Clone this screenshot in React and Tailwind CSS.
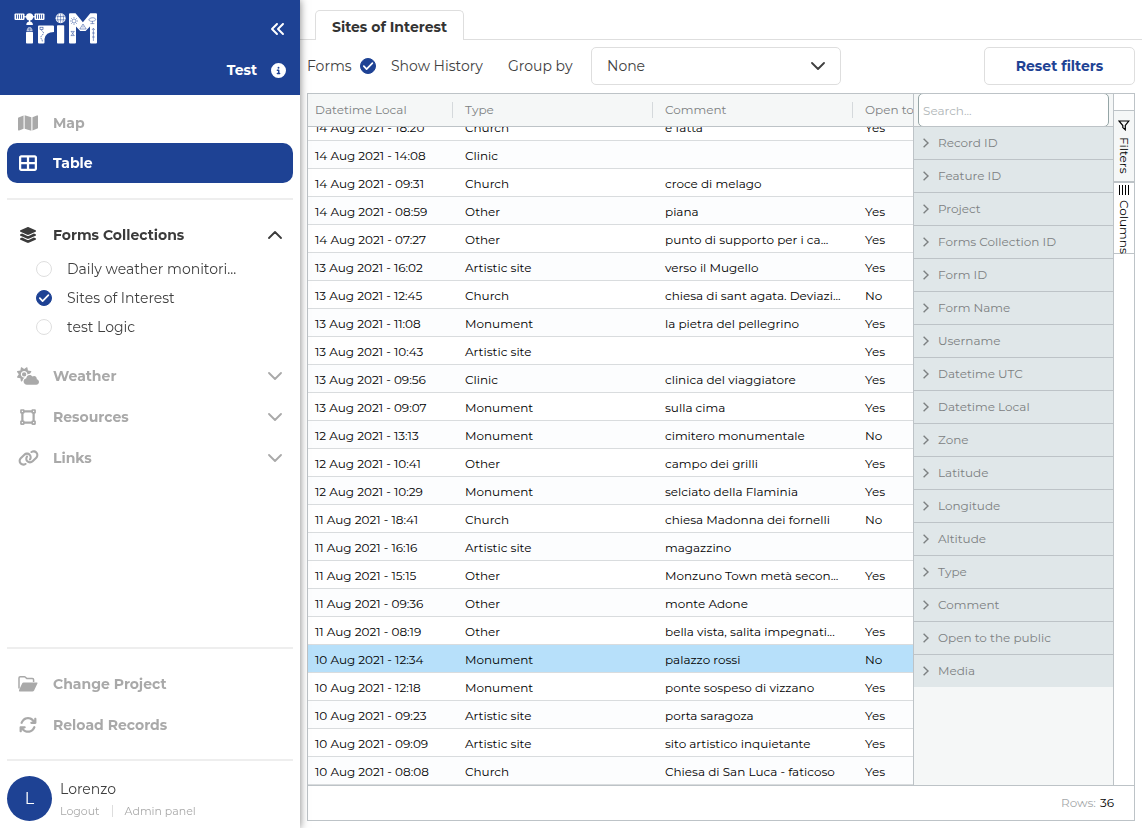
import { useLayoutEffect, useRef } from "react";
import {
  FaAnglesLeft,
  FaArrowsRotate,
  FaCircleInfo,
  FaCloudSun,
  FaLayerGroup,
  FaLink,
  FaMap,
  FaTableCellsLarge,
  FaVectorSquare,
} from "react-icons/fa6";

const records = [
  ["14 Aug 2021 - 18:20", "Church", "e fatta", "Yes"],
  ["14 Aug 2021 - 14:08", "Clinic", "", ""],
  ["14 Aug 2021 - 09:31", "Church", "croce di melago", ""],
  ["14 Aug 2021 - 08:59", "Other", "piana", "Yes"],
  ["14 Aug 2021 - 07:27", "Other", "punto di supporto per i ca...", "Yes"],
  ["13 Aug 2021 - 16:02", "Artistic site", "verso il Mugello", "Yes"],
  ["13 Aug 2021 - 12:45", "Church", "chiesa di sant agata. Deviazi...", "No"],
  ["13 Aug 2021 - 11:08", "Monument", "la pietra del pellegrino", "Yes"],
  ["13 Aug 2021 - 10:43", "Artistic site", "", "Yes"],
  ["13 Aug 2021 - 09:56", "Clinic", "clinica del viaggiatore", "Yes"],
  ["13 Aug 2021 - 09:07", "Monument", "sulla cima", "Yes"],
  ["12 Aug 2021 - 13:13", "Monument", "cimitero monumentale", "No"],
  ["12 Aug 2021 - 10:41", "Other", "campo dei grilli", "Yes"],
  ["12 Aug 2021 - 10:29", "Monument", "selciato della Flaminia", "Yes"],
  ["11 Aug 2021 - 18:41", "Church", "chiesa Madonna dei fornelli", "No"],
  ["11 Aug 2021 - 16:16", "Artistic site", "magazzino", ""],
  ["11 Aug 2021 - 15:15", "Other", "Monzuno Town metà secon...", "Yes"],
  ["11 Aug 2021 - 09:36", "Other", "monte Adone", ""],
  ["11 Aug 2021 - 08:19", "Other", "bella vista, salita impegnati...", "Yes"],
  ["10 Aug 2021 - 12:34", "Monument", "palazzo rossi", "No"],
  ["10 Aug 2021 - 12:18", "Monument", "ponte sospeso di vizzano", "Yes"],
  ["10 Aug 2021 - 09:23", "Artistic site", "porta saragoza", "Yes"],
  ["10 Aug 2021 - 09:09", "Artistic site", "sito artistico inquietante", "Yes"],
  ["10 Aug 2021 - 08:08", "Church", "Chiesa di San Luca - faticoso", "Yes"],
];

const selectedRecord = "10 Aug 2021 - 12:34";

const columns = ["Datetime Local", "Type", "Comment", "Open to the public"];

const filters = [
  "Record ID",
  "Feature ID",
  "Project",
  "Forms Collection ID",
  "Form ID",
  "Form Name",
  "Username",
  "Datetime UTC",
  "Datetime Local",
  "Zone",
  "Latitude",
  "Longitude",
  "Altitude",
  "Type",
  "Comment",
  "Open to the public",
  "Media",
];

function Logo() {
  return (
    <svg viewBox="0 0 84 31" className="h-[31px] w-[84px]" fill="#fff" role="img" aria-label="TriM">
      <rect x="0.5" y="0.5" width="10" height="6.5" rx="1" />
      <rect x="20.5" y="0.5" width="10" height="6.5" rx="1" />
      <path d="M10 3.2h11v1.2H10z" />
      <path
        d="M2.5 1.6v4.2M4.5 1.6v4.2M6.5 1.6v4.2M8.5 1.6v4.2M22.5 1.6v4.2M24.5 1.6v4.2M26.5 1.6v4.2M28.5 1.6v4.2"
        stroke="#1e4294"
        strokeWidth="0.8"
      />
      <circle cx="15.6" cy="3.8" r="3.6" />
      <path d="M12.3 12a3.3 3.6 0 0 1 6.6 0z" />
      <path d="M15 6h1.2v4H15z" />
      <path d="M12.6 18c0-2.3 1.3-4 3-4s3 1.7 3 4z" opacity="0.7" />
      <path d="M13.6 16.2h4M15.6 14.5v3.5" stroke="#1e4294" strokeWidth="0.4" />
      <rect x="12" y="18.8" width="7" height="11.8" rx="0.8" />
      <path d="M24 13.4q0-1 1-1h14q1 0 1 1V19q-8.5 0-9.500 7v3.600q0 1-1 1H25q-1 0-1-1z" />
      <path
        d="M27.3 17.2c1.6 1.6 2.6 2 2 3.6-.8 1.6-2.6 2-2.4 4 .2 1.4 1.6 1.4 1.4 4"
        fill="none"
        stroke="#1e4294"
        strokeWidth="0.7"
        strokeDasharray="1.600 0.700"
      />
      <rect x="26" y="14.2" width="3" height="2.4" fill="none" stroke="#1e4294" strokeWidth="0.6" />
      <circle cx="46.6" cy="5.2" r="5" />
      <path
        d="M42.4 3.6h8.4M42.4 6.8h8.4M46.6.6v9.2M44.4 1.2c-1 2.6-1 5.4 0 8M48.8 1.2c1 2.6 1 5.4 0 8"
        fill="none"
        stroke="#1e4294"
        strokeWidth="0.5"
      />
      <rect x="43" y="12.200" width="7.200" height="18.400" rx="0.800" />
      <path d="M55 1.200q0-1 1-1h5.500l7.400 9 7.400-9H82q1 0 1 1v28.400q0 1-1 1h-5q-1 0-1-1V13.400L71.600 18h-5.400L62 13.400v16.200q0 1-1 1h-5q-1 0-1-1z" />
      <g fill="none" stroke="#1e4294" strokeWidth="0.5">
        <circle cx="60" cy="8" r="2" />
        <path d="M60 4v1.200M60 10.800V12M56 8h1.200M62.800 8H64M57.200 5.200l.9.9M61.900 9.900l.9.9M62.800 5.200l-.9.9M57.200 10.800l.9-.9" />
        <path d="m69 11-3.200 5h6.400zM69 12.800v1.800" />
        <path d="M75 7.200c-1-2 5-3.600 6.400-1.400C83 8.400 76 9.200 75 7.200M78.400 8v2.600M76.400 10.600h4" />
        <path d="M56.800 18.400h3.600M56.800 22.600h3.600M57.200 18.400l3 4.200M60.200 18.400l-3 4.200" />
        <path d="M79.400 28V15.600M78 17l1.400-1.800 1.400 1.800M78 20h2.800M78 24h2.800" />
      </g>
    </svg>
  );
}

function FolderOpenIcon() {
  return (
    <svg viewBox="0 0 20 16" className="h-4 w-5" aria-hidden="true">
      <path
        d="M1 12.500V2Q1 .8 2.200.8h4.300Q7 .8 7.400 1.200L8.800 2.600h5.600q1.200 0 1.200 1.200V6"
        fill="none"
        stroke="currentColor"
        strokeWidth="1.500"
      />
      <path
        d="M5.600 6.500h13.200q1.200 0 .6 1.100l-3.300 6.900q-.6 1-1.700 1H2q-1.700 0-.9-1.500l3-6.500q.5-1 1.500-1z"
        fill="currentColor"
      />
    </svg>
  );
}

function Chevron({ className = "" }) {
  return (
    <svg viewBox="0 0 14 8" className={`h-2 w-[14px] ${className}`} fill="none" stroke="currentColor" aria-hidden="true">
      <path d="m1 1 6 6 6-6" strokeWidth="1.800" strokeLinecap="round" strokeLinejoin="round" />
    </svg>
  );
}

function RoundCheck({ id, type, name, checked }) {
  return (
    <span className="grid size-4 shrink-0 place-items-center">
      <input
        id={id}
        type={type}
        name={name}
        defaultChecked={checked}
        className="peer col-start-1 row-start-1 size-4 appearance-none rounded-full border border-[#dedede] bg-white checked:border-[#1e4294] checked:bg-[#1e4294]"
      />
      <svg
        viewBox="0 0 16 16"
        className="pointer-events-none col-start-1 row-start-1 size-4 opacity-0 peer-checked:opacity-100"
        fill="none"
        stroke="#fff"
        strokeWidth="1.700"
        strokeLinecap="round"
        strokeLinejoin="round"
        aria-hidden="true"
      >
        <path d="m3.800 8.200 2.800 2.900 5.800-5.900" />
      </svg>
    </span>
  );
}

function NavButton({ icon, label, tone = "text-[#a9a9a9]", size = "h-[41px]", chevron }) {
  return (
    <button
      type="button"
      className={`flex w-full items-center rounded-[10px] pr-[11px] pl-[10px] text-left text-sm font-bold ${size} ${tone}`}
    >
      <span className="flex w-[22px] justify-center">{icon}</span>
      <span className="ml-[14px] flex-1">{label}</span>
      {chevron}
    </button>
  );
}

function Sidebar() {
  const forms = ["Daily weather monitori...", "Sites of Interest", "test Logic"];
  return (
    <aside className="z-10 flex w-[300px] shrink-0 flex-col bg-white shadow-[0_0_8px_rgba(0,0,0,0.5)]">
      <header className="flex h-[95px] shrink-0 flex-col justify-between bg-[#1e4294] pt-[13px] pr-[14px] pb-[15px] pl-[14px] text-white">
        <div className="flex items-center justify-between">
          <Logo />
          <button type="button" aria-label="Collapse sidebar">
            <FaAnglesLeft className="size-4" />
          </button>
        </div>
        <div className="flex items-center justify-end gap-[14px] text-sm leading-5 font-bold">
          Test
          <FaCircleInfo className="size-[15px]" />
        </div>
      </header>
      <nav className="flex min-h-0 flex-1 flex-col px-[7px] pt-2">
        <NavButton icon={<FaMap className="h-[18px] w-5" />} label="Map" size="h-10" />
        <NavButton
          icon={<FaTableCellsLarge className="size-[18px]" />}
          label="Table"
          size="h-10"
          tone="bg-[#1e4294] text-white"
        />
        <hr className="my-[15px] border-t-2 border-[#eee]" />
        <NavButton
          icon={<FaLayerGroup className="size-[18px]" />}
          label="Forms Collections"
          size="h-[39px]"
          tone="text-[#3b3b3b]"
          chevron={<Chevron className="rotate-180" />}
        />
        <ul className="mb-[14px]">
          {forms.map((form, i) => (
            <li key={form} className="flex h-[29px] items-center gap-[15px] pl-[29px] text-sm text-[#3f3f3f]">
              <RoundCheck id={`form-${i}`} type="radio" name="form" checked={i === 1} />
              <label htmlFor={`form-${i}`}>{form}</label>
            </li>
          ))}
        </ul>
        <NavButton icon={<FaCloudSun className="h-[18px] w-[22px]" />} label="Weather" chevron={<Chevron />} />
        <NavButton icon={<FaVectorSquare className="size-[18px]" />} label="Resources" chevron={<Chevron />} />
        <NavButton icon={<FaLink className="h-[18px] w-[21px]" />} label="Links" chevron={<Chevron />} />
        <hr className="mt-auto mb-[14px] border-t-2 border-[#eee]" />
        <NavButton icon={<FolderOpenIcon />} label="Change Project" />
        <NavButton icon={<FaArrowsRotate className="size-[18px]" />} label="Reload Records" />
        <hr className="mt-[14px] mb-[15px] border-t-2 border-[#eee]" />
      </nav>
      <footer className="flex items-center gap-2 px-[7px] pb-[7px]">
        <span className="grid size-[45px] place-items-center rounded-full bg-[#1e4294] text-base text-white">L</span>
        <div className="flex flex-col gap-1 pt-px">
          <span className="text-sm leading-5 text-[#3f3f3f]">Lorenzo</span>
          <span className="flex items-center text-[11px] leading-4 text-[#a9a9a9]">
            <a href="#logout">Logout</a>
            <span className="mx-3 h-3 w-px bg-[#ddd]" />
            <a href="#admin">Admin panel</a>
          </span>
        </div>
      </footer>
    </aside>
  );
}

function Toolbar() {
  return (
    <div className="flex items-center pt-[7px] pr-[7px] pb-2 pl-[7px] text-sm text-[#3f3f3f]">
      <span className="w-[53px]">Forms</span>
      <RoundCheck id="history" type="checkbox" checked />
      <label htmlFor="history" className="ml-[15px] w-[117px] whitespace-nowrap">
        Show History
      </label>
      <label htmlFor="group" className="w-[83px] whitespace-nowrap">
        Group by
      </label>
      <div className="grid w-[250px] items-center">
        <select
          id="group"
          className="col-start-1 row-start-1 h-[38px] w-full appearance-none rounded-[5px] border border-[#dedede] bg-white px-[15px]"
        >
          <option>None</option>
        </select>
        <Chevron className="pointer-events-none col-start-1 row-start-1 mr-4 justify-self-end" />
      </div>
      <button
        type="button"
        className="ml-auto h-[38px] w-[151px] rounded-[5px] border border-[#dedede] font-bold text-[#1e4294]"
      >
        Reset filters
      </button>
    </div>
  );
}

function RecordsTable() {
  const scroller = useRef(null);
  useLayoutEffect(() => {
    scroller.current.scrollTop = scroller.current.scrollHeight;
  }, []);

  return (
    <div ref={scroller} className="min-w-0 flex-1 overflow-x-hidden overflow-y-auto [scrollbar-width:none]">
      <table className="w-full min-w-[745px] table-fixed border-separate border-spacing-0 text-left text-xs">
        <colgroup>
          <col className="w-[145px]" />
          <col className="w-[200px]" />
          <col className="w-[200px]" />
          <col />
        </colgroup>
        <thead>
          <tr>
            {columns.map((column) => (
              <th
                key={column}
                scope="col"
                className="sticky top-0 h-[33px] border-b border-[#bdc3c7] bg-[#f5f7f7] py-0 pr-0 pl-3 font-normal whitespace-nowrap text-[#7d8182] first:pl-[7px]"
              >
                <span className="flex h-4 items-center border-r border-[#d5d9dc]">{column}</span>
              </th>
            ))}
          </tr>
        </thead>
        <tbody>
          {records.map((record, i) => (
            <tr
              key={record[0]}
              className={record[0] === selectedRecord ? "bg-[#b7e0fa]" : i % 2 ? "bg-[#fcfdfe]" : "bg-white"}
            >
              {record.map((value, c) => (
                <td
                  key={columns[c]}
                  className="h-7 border-b border-[#d9dcde] pt-[2px] pr-0 pb-0 pl-3 whitespace-nowrap text-black first:pl-[7px]"
                >
                  {value}
                </td>
              ))}
            </tr>
          ))}
        </tbody>
      </table>
    </div>
  );
}

function FilterPanel() {
  return (
    <div className="w-[200px] shrink-0 border-l border-[#bdc3c7] bg-[#f5f7f7] text-xs text-[#7d8182]">
      <div className="flex h-[33px] items-center overflow-hidden border-b border-[#bdc3c7] px-1">
        <input
          type="text"
          aria-label="Search filters"
          placeholder="Search..."
          className="h-[34px] w-full shrink-0 rounded-[5px] border border-[#95a5a6] bg-white px-1 placeholder:text-[#b0b6b8]"
        />
      </div>
      <ul className="divide-y divide-[#bdc3c7] bg-[#e0e7e9]">
        {filters.map((filter) => (
          <li key={filter}>
            <button type="button" className="flex h-8 w-full items-center gap-2 pl-2 text-left">
              <svg
                viewBox="0 0 8 10"
                className="h-[10px] w-2"
                fill="none"
                stroke="currentColor"
                strokeWidth="1.400"
                aria-hidden="true"
              >
                <path d="M1.600.8 6 5 1.600 9.200" />
              </svg>
              {filter}
            </button>
          </li>
        ))}
      </ul>
    </div>
  );
}

function SideButtons() {
  return (
    <div className="w-[21px] shrink-0 border-l border-[#bdc3c7] pt-4 text-xs text-black">
      <button
        type="button"
        className="flex h-[72px] w-full flex-col items-center gap-[6px] border-y border-[#bdc3c7] bg-[#f5f7f7] pt-[9px] pr-px"
      >
        <svg viewBox="0 0 12 11" className="h-[11px] w-3 shrink-0" fill="none" stroke="currentColor" aria-hidden="true">
          <path d="M1 1h9.800L7.300 5.500v4.300L4.800 7.600V5.500z" strokeWidth="1.200" />
        </svg>
        <span className="[writing-mode:vertical-rl]">Filters</span>
      </button>
      <button
        type="button"
        className="flex h-[72px] w-full flex-col items-center gap-[5px] border-y border-[#bdc3c7] pt-[2px] pr-px"
      >
        <svg viewBox="0 0 12 10" className="h-[10px] w-3 shrink-0" stroke="currentColor" aria-hidden="true">
          <path d="M1.500 0v10M4.500 0v10M7.500 0v10M10.500 0v10" strokeWidth="1" />
        </svg>
        <span className="[writing-mode:vertical-rl]">Columns</span>
      </button>
    </div>
  );
}

export default function App() {
  return (
    <div className="flex h-screen overflow-hidden bg-white font-['Montserrat',Inter,sans-serif]">
      <Sidebar />
      <main className="flex min-w-0 flex-1 flex-col">
        <div className="flex border-b border-[#dedede] pt-[10px] pl-[15px]" role="tablist">
          <button
            type="button"
            role="tab"
            aria-selected="true"
            className="-mb-px h-[30px] rounded-t-[5px] border border-b-0 border-[#dedede] bg-white px-4 pt-[2px] text-sm font-bold text-[#333]"
          >
            Sites of Interest
          </button>
        </div>
        <Toolbar />
        <section className="mx-[7px] mb-[7px] flex min-h-0 flex-1 flex-col border border-[#bdc3c7]">
          <div className="flex min-h-0 flex-1">
            <RecordsTable />
            <FilterPanel />
            <SideButtons />
          </div>
          <div className="flex h-[35px] shrink-0 items-center justify-end gap-1 border-t border-[#bdc3c7] pr-5 text-xs text-[#a5a9aa]">
            Rows: <span className="text-black">36</span>
          </div>
        </section>
      </main>
    </div>
  );
}
